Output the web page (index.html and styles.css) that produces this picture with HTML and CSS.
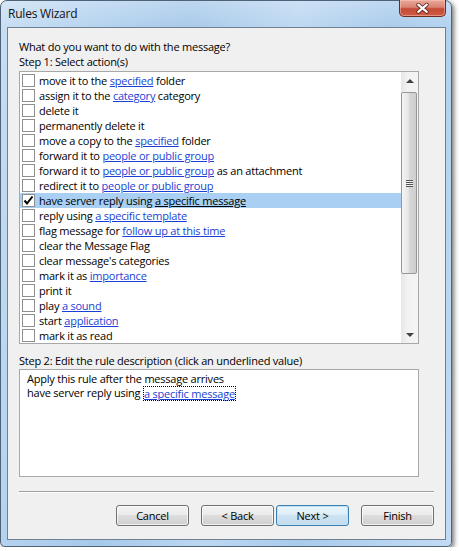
FILE: index.html
```html
<!DOCTYPE html>
<html>
<head>
<meta charset="utf-8">
<title>Rules Wizard</title>
<link rel="stylesheet" href="styles.css">
</head>
<body>
<div class="window">
  <div class="titlebar">
    <span class="title">Rules Wizard</span>
    <div class="close">
      <svg width="47" height="17" viewBox="0 0 47 17">
        <path d="M19 4.5 L28 12 M28 4.5 L19 12" stroke="#5a2020" stroke-width="4" stroke-linecap="round" fill="none"/>
        <path d="M19 4.5 L28 12 M28 4.5 L19 12" stroke="#ffffff" stroke-width="2.2" stroke-linecap="round" fill="none"/>
      </svg>
    </div>
  </div>
  <div class="panel">
    <div class="label">What do you want to do with the message?</div>
    <div class="label">Step 1: Select action(s)</div>
    <div class="listbox">
      <ul class="items">
        <li class="item"><span class="cb"></span><span>move it to the <span class="link">specified</span> folder</span></li>
        <li class="item"><span class="cb"></span><span>assign it to the <span class="link">category</span> category</span></li>
        <li class="item"><span class="cb"></span><span>delete it</span></li>
        <li class="item"><span class="cb"></span><span>permanently delete it</span></li>
        <li class="item"><span class="cb"></span><span>move a copy to the <span class="link">specified</span> folder</span></li>
        <li class="item"><span class="cb"></span><span>forward it to <span class="link">people or public group</span></span></li>
        <li class="item"><span class="cb"></span><span>forward it to <span class="link">people or public group</span> as an attachment</span></li>
        <li class="item"><span class="cb"></span><span>redirect it to <span class="link">people or public group</span></span></li>
        <li class="item selected"><span class="cb checked"><svg width="11" height="11" viewBox="0 0 11 11"><path d="M1.5 5.5 L4 8.5 L9.5 1.5" stroke="#000" stroke-width="2" fill="none"/></svg></span><span>have server reply using <span class="link">a specific message</span></span></li>
        <li class="item"><span class="cb"></span><span>reply using <span class="link">a specific template</span></span></li>
        <li class="item"><span class="cb"></span><span>flag message for <span class="link">follow up at this time</span></span></li>
        <li class="item"><span class="cb"></span><span>clear the Message Flag</span></li>
        <li class="item"><span class="cb"></span><span>clear message's categories</span></li>
        <li class="item"><span class="cb"></span><span>mark it as <span class="link">importance</span></span></li>
        <li class="item"><span class="cb"></span><span>print it</span></li>
        <li class="item"><span class="cb"></span><span>play <span class="link">a sound</span></span></li>
        <li class="item"><span class="cb"></span><span>start <span class="link">application</span></span></li>
        <li class="item"><span class="cb"></span><span>mark it as read</span></li>
      </ul>
      <div class="scrollbar">
        <div class="sb-btn"><span class="arrow up"></span></div>
        <div class="sb-track">
          <div class="thumb"><span class="grip"></span></div>
        </div>
        <div class="sb-btn"><span class="arrow down"></span></div>
      </div>
    </div>
    <div class="label step2">Step 2: Edit the rule description (click an underlined value)</div>
    <div class="desc">
      <div class="desc-line">Apply this rule after the message arrives</div>
      <div class="desc-line">have server reply using <span class="link focus">a specific message</span></div>
    </div>
    <div class="sep"></div>
    <div class="buttons">
      <div class="btn">Cancel</div>
      <div class="btn back">&lt; Back</div>
      <div class="btn default">Next &gt;</div>
      <div class="btn finish">Finish</div>
    </div>
  </div>
</div>
</body>
</html>
```
FILE: styles.css
```css
html, body {
  margin: 0;
  padding: 0;
  background: #ffffff;
}

body {
  font-family: "Open Sans", "Noto Sans", "DejaVu Sans", sans-serif;
  font-size: 11px;
  letter-spacing: -0.22px;
  color: #000;
}

.window {
  width: 452px;
  height: 547px;
  box-sizing: border-box;
  border: 1px solid #4e6378;
  border-radius: 7px 7px 5px 5px;
  background:
    linear-gradient(to bottom, rgba(255,255,255,0.25), rgba(255,255,255,0) 30px),
    linear-gradient(100deg, #c8def3 0%, #b4d2ef 18%, #a7c9ea 35%, #bcd7f1 55%, #a9cbec 72%, #c2dbf3 100%);
  display: flex;
  flex-direction: column;
  box-shadow: 2px 2px 5px rgba(0, 0, 0, 0.55);
}

.titlebar {
  height: 26px;
  display: flex;
  align-items: flex-start;
  justify-content: space-between;
  padding-left: 7px;
  flex-shrink: 0;
}

.title {
  margin-top: 5px;
  line-height: 15px;
  font-size: 12px;
  color: #111;
}

.close {
  width: 47px;
  height: 17px;
  margin-right: 5px;
  margin-top: -1px;
  box-sizing: border-box;
  border: 1px solid #6b2a22;
  border-top: none;
  border-radius: 0 0 5px 5px;
  background: linear-gradient(to bottom, #e9a99a 0%, #d98373 45%, #c44a36 55%, #cf5d44 100%);
  box-shadow: inset 0 0 0 1px rgba(255, 200, 190, 0.5);
  display: flex;
}

.panel {
  flex: 1;
  margin: 0 5px 6px 6px;
  border: 1px solid #6f8092;
  background: #f0f0f0;
  padding: 11px 11px 0 11px;
  display: flex;
  flex-direction: column;
}

.label {
  line-height: 15px;
  white-space: nowrap;
}

.listbox {
  margin-top: 2px;
  width: 400px;
  height: 273px;
  box-sizing: border-box;
  border: 1px solid #a8a8a8;
  background: #fff;
  display: flex;
}

.items {
  list-style: none;
  margin: 0;
  padding: 1px 0 0 0;
  flex: 1;
}

.item {
  height: 15px;
  display: flex;
  align-items: center;
  white-space: nowrap;
  line-height: 15px;
}

.item.selected {
  background: #a9cff2;
}

.cb {
  width: 13px;
  height: 13px;
  box-sizing: border-box;
  border: 1px solid #8e8f8f;
  background: #fff;
  margin-left: 2px;
  margin-right: 4px;
  flex-shrink: 0;
  display: flex;
  align-items: center;
  justify-content: center;
}

.link {
  color: #1a3fd4;
  text-decoration: underline;
}

.selected .link {
  color: #000;
}

.scrollbar {
  width: 17px;
  display: flex;
  flex-direction: column;
  background: linear-gradient(to right, #e6e6e6, #f2f2f2 40%, #f4f4f4);
}

.sb-btn {
  height: 17px;
  display: flex;
  align-items: center;
  justify-content: center;
  flex-shrink: 0;
}

.arrow {
  width: 0;
  height: 0;
  border-left: 4px solid transparent;
  border-right: 4px solid transparent;
}

.arrow.up {
  border-bottom: 4px solid #404040;
}

.arrow.down {
  border-top: 4px solid #404040;
}

.sb-track {
  flex: 1;
  padding-top: 3px;
}

.thumb {
  height: 182px;
  box-sizing: border-box;
  border: 1px solid #979797;
  border-radius: 2px;
  margin: 0 1px 0 0;
  background: linear-gradient(to right, #f4f4f4, #e6e6e6 45%, #d6d6d6 55%, #cfcfcf);
  display: flex;
  align-items: center;
  justify-content: center;
}

.grip {
  width: 7px;
  height: 7px;
  background: repeating-linear-gradient(to bottom, #555 0, #555 1px, #eee 1px, #eee 2px);
}

.step2 {
  margin-top: 9px;
}

.desc {
  margin-top: 1px;
  width: 400px;
  height: 108px;
  box-sizing: border-box;
  border: 1px solid #a8a8a8;
  background: #fff;
  padding: 2px 0 0 7px;
}

.desc-line {
  height: 14px;
  line-height: 14px;
  white-space: nowrap;
}

.link.focus {
  display: inline-block;
  height: 13px;
  line-height: 13px;
  vertical-align: top;
  margin-top: 1px;
  outline: 1px dotted #000;
  outline-offset: 0;
  margin-left: 1px;
}

.sep {
  margin-top: 14px;
  height: 0;
  border-top: 1px solid #a0a0a0;
  border-bottom: 1px solid #ffffff;
}

.buttons {
  margin-top: 12px;
  display: flex;
  justify-content: flex-end;
}

.btn {
  width: 73px;
  height: 21px;
  box-sizing: border-box;
  border: 1px solid #707070;
  border-radius: 3px;
  background: linear-gradient(to bottom, #f2f2f2 0%, #ebebeb 50%, #dddddd 50%, #cfcfcf 100%);
  box-shadow: inset 0 0 0 1px rgba(255, 255, 255, 0.7);
  display: flex;
  align-items: center;
  justify-content: center;
  line-height: 15px;
}

.btn.back {
  margin-left: 12px;
}

.btn.default {
  margin-left: 2px;
  border-color: #3c7fb1;
  box-shadow: inset 0 0 0 1px #bfe4f7;
  background: linear-gradient(to bottom, #eaf6fd 0%, #dcecf7 50%, #cde3f2 50%, #c3dbee 100%);
}

.btn.finish {
  margin-left: 12px;
}
```
